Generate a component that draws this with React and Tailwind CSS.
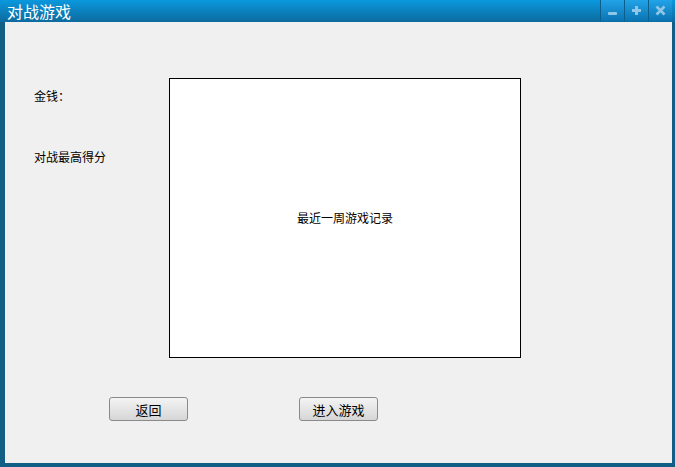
const font = { fontFamily: '"Noto Sans CJK SC", "Liberation Sans", sans-serif' };

function TitleButton({ children }) {
  return (
    <div className="flex h-[21px] w-[24px] items-center justify-center border-l border-[#0b5f8c] bg-gradient-to-b from-[#22a3e8] to-[#0a74b2]">
      {children}
    </div>
  );
}

function Btn({ children }) {
  return (
    <button className="h-[24px] w-[79px] rounded-[3px] border border-[#8a8a8a] bg-gradient-to-b from-[#f4f4f4] to-[#d6d6d6] text-[13px] leading-none text-black">
      {children}
    </button>
  );
}

export default function App() {
  return (
    <div className="flex h-[467px] w-[675px] flex-col bg-[#125f86]" style={font}>
      <div className="flex h-[22px] items-start justify-between bg-gradient-to-b from-[#0a98de] to-[#0c6b9f]">
        <span className="pl-[7px] pt-[1px] text-[16px] leading-[20px] text-white">对战游戏</span>
        <div className="flex pr-[3px]">
          <TitleButton>
            <div className="mt-[6px] h-[3px] w-[9px] rounded-[1px] bg-[#8fc6e6]" />
          </TitleButton>
          <TitleButton>
            <svg width="11" height="11" viewBox="0 0 11 11">
              <path d="M5.5 1v9M1 5.5h9" stroke="#8fc6e6" strokeWidth="3" />
            </svg>
          </TitleButton>
          <TitleButton>
            <svg width="11" height="11" viewBox="0 0 11 11">
              <path d="M1.5 1.5l8 8M9.5 1.5l-8 8" stroke="#8fc6e6" strokeWidth="2.6" />
            </svg>
          </TitleButton>
        </div>
      </div>
      <div className="mb-[4px] ml-[5px] mr-[3px] flex-1 bg-[#f0f0f0] pl-[29px] pt-[56px]">
        <div className="flex">
          <div className="flex w-[135px] flex-col gap-[45px] pt-[10px] text-[12px] leading-[16px] text-black">
            <span>金钱：</span>
            <span>对战最高得分</span>
          </div>
          <div className="flex h-[280px] w-[352px] items-center justify-center border border-black bg-white text-[12px] text-black">
            最近一周游戏记录
          </div>
        </div>
        <div className="mt-[39px] flex gap-[111px] pl-[75px]">
          <Btn>返回</Btn>
          <Btn>进入游戏</Btn>
        </div>
      </div>
    </div>
  );
}
